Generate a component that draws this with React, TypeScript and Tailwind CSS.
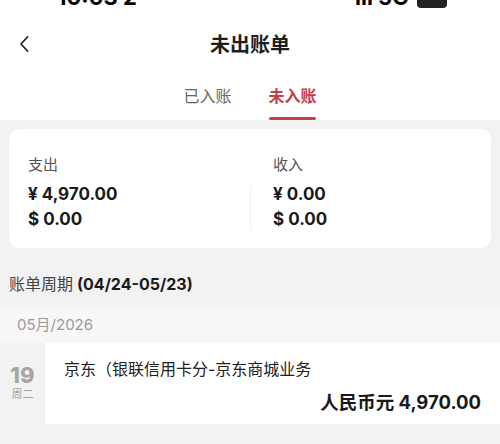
import React from "react";

const font = { fontFamily: '"Inter", "Noto Sans CJK SC", sans-serif' };

function Amount({ sign, value }: { sign: string; value: string }) {
  return (
    <div className="text-[17px] font-bold leading-[25px] text-[#1a1a1a]">
      {sign} {value}
    </div>
  );
}

export default function App() {
  return (
    <div className="h-[444px] w-[500px] overflow-hidden bg-[#f2f2f2]" style={font}>
      <div className="bg-white">
        {/* status bar, cut off at the top */}
        <div className="relative h-[8px] overflow-hidden">
          <div className="absolute bottom-0 left-[57px] text-[22px] font-bold leading-[22px] text-black">10:03 2</div>
          <div className="absolute bottom-0 left-[355px] flex items-end gap-2">
            <span className="text-[22px] font-bold leading-[22px] text-black">ııl 5G</span>
            <span className="h-[14px] w-[30px] rounded-[4px] bg-[#222]" />
          </div>
        </div>

        <div className="relative flex h-[72px] items-center justify-center">
          <svg className="absolute left-[18px] top-[27px]" width="12" height="18" viewBox="0 0 12 18">
            <path d="M9.5 2 L3 9 L9.5 16" fill="none" stroke="#222" strokeWidth="1.8" strokeLinecap="round" strokeLinejoin="round" />
          </svg>
          <div className="pt-[2px] text-[20px] font-bold text-[#1f1f1f]">未出账单</div>
        </div>

        <div className="flex h-[40px] justify-center gap-[37px]">
          <div className="flex flex-col items-center">
            <div className="pt-[3px] text-[16px] leading-[26px] text-[#666]">已入账</div>
          </div>
          <div className="flex flex-col items-center">
            <div className="pt-[3px] text-[16px] font-bold leading-[26px] text-[#c4404b]">未入账</div>
            <div className="mt-[8px] h-[3px] w-[47px] rounded-full bg-[#c4404b]" />
          </div>
        </div>
      </div>

      <div className="px-[9px] pt-[9px]">
        <div className="flex h-[119px] rounded-[10px] bg-white px-[19px] pt-[25px]">
          <div className="w-[222px]">
            <div className="text-[15px] leading-[22px] text-[#555]">支出</div>
            <div className="mt-[6px]">
              <Amount sign="¥" value="4,970.00" />
              <Amount sign="$" value="0.00" />
            </div>
          </div>
          <div className="mt-[32px] h-[44px] w-px bg-[#eeeeee]" />
          <div className="flex-1 pl-[22px]">
            <div className="text-[15px] leading-[22px] text-[#555]">收入</div>
            <div className="mt-[6px]">
              <Amount sign="¥" value="0.00" />
              <Amount sign="$" value="0.00" />
            </div>
          </div>
        </div>
      </div>

      <div className="flex h-[60px] items-center px-[9px] pt-[12px] text-[16px] text-[#444]">
        账单周期<span className="ml-[4px] font-bold text-[#1a1a1a]">(04/24-05/23)</span>
      </div>

      <div className="flex h-[35px] items-center bg-[#f7f7f7] px-[17px] text-[15px] text-[#9a9a9a]">
        05月/2026
      </div>

      <div className="flex h-[81px]">
        <div className="flex w-[45px] flex-col items-center pt-[20px]">
          <div className="text-[22px] font-extrabold leading-[24px] text-[#a6a6a6]">19</div>
          <div className="text-[11px] leading-[14px] text-[#a6a6a6]">周二</div>
        </div>
        <div className="flex-1 bg-white pl-[19px] pr-[19px] pt-[15px]">
          <div className="text-[16px] leading-[22px] text-[#222]">京东（银联信用卡分-京东商城业务</div>
          <div className="mt-[9px] text-right text-[18.5px] font-bold leading-[26px] text-[#1a1a1a]">人民币元 4,970.00</div>
        </div>
      </div>
    </div>
  );
}
